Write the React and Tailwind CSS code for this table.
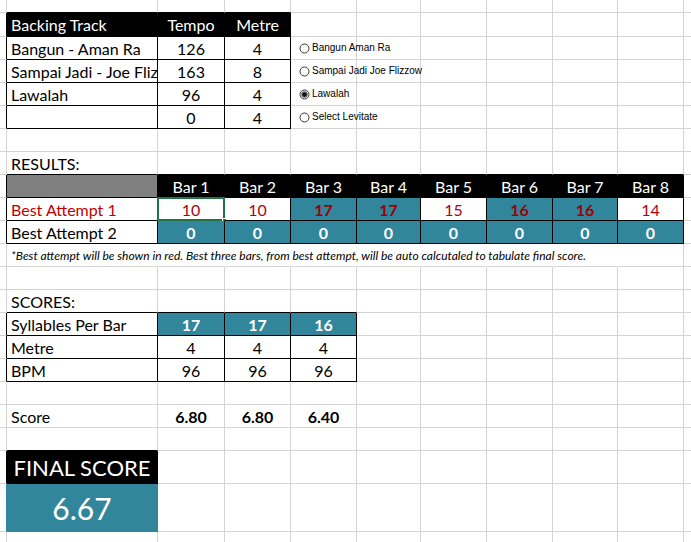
import React from 'react';

const TEAL = 'bg-[#31869b]';

const R = {
  g: 'border-r-[#d4d4d4]',
  k: 'border-r-black',
  w: 'border-r-white',
  t: 'border-r-[#31869b]',
};
const B = {
  g: 'border-b-[#d4d4d4]',
  k: 'border-b-black',
  w: 'border-b-white',
  t: 'border-b-[#31869b]',
};

const NR = 23;
const NC = 11;

const Radio = ({ label, checked }) => (
  <div className="relative z-10 flex items-center gap-[2px] pl-[8px] whitespace-nowrap font-['Liberation_Sans',Arial,sans-serif] text-[10px] text-black">
    <svg width="11" height="11" viewBox="0 0 11 11">
      <circle cx="5.5" cy="5.5" r="4.5" fill="white" stroke="#333" strokeWidth="1" />
      {checked && <circle cx="5.5" cy="5.5" r="3.3" fill="#777" />}
      {checked && <circle cx="5.5" cy="5.5" r="2.2" fill="#111" />}
    </svg>
    <span className="pb-[1px]">{label}</span>
  </div>
);

function buildSheet() {
  const grid = Array.from({ length: NR }, () =>
    Array.from({ length: NC }, () => ({ r: 'g', b: 'g', bg: '', cls: '', node: null }))
  );

  // black borders round every cell of a table
  const boxTable = (r0, r1, c0, c1) => {
    for (let r = r0; r <= r1; r++) {
      for (let c = c0; c <= c1; c++) {
        grid[r][c].r = 'k';
        grid[r][c].b = 'k';
      }
      grid[r][c0 - 1].r = 'k';
    }
    for (let c = c0; c <= c1; c++) grid[r0 - 1][c].b = 'k';
  };

  const text = (r, c, s, cls = '') => {
    grid[r][c].node = s;
    grid[r][c].cls = 'justify-start pl-[4px] ' + cls;
  };
  const num = (r, c, s, cls = '') => {
    grid[r][c].node = s;
    grid[r][c].cls = 'justify-center ' + cls;
  };

  // Backing track table
  boxTable(1, 5, 1, 3);
  for (let c = 1; c <= 3; c++) grid[1][c].bg = 'bg-black';
  text(1, 1, 'Backing Track', 'text-white');
  num(1, 2, 'Tempo', 'text-white');
  num(1, 3, 'Metre', 'text-white');
  const tracks = [
    ['Bangun - Aman Ra', '126', '4'],
    ['Sampai Jadi - Joe Flizzow', '163', '8'],
    ['Lawalah', '96', '4'],
    ['', '0', '4'],
  ];
  tracks.forEach(([name, tempo, metre], i) => {
    text(2 + i, 1, name);
    num(2 + i, 2, tempo);
    num(2 + i, 3, metre);
  });
  const radios = ['Bangun Aman Ra', 'Sampai Jadi Joe Flizzow', 'Lawalah', 'Select Levitate'];
  radios.forEach((label, i) => {
    grid[2 + i][4].node = <Radio label={label} checked={i === 2} />;
    grid[2 + i][4].cls = 'overflow-visible';
  });

  // Results
  text(7, 1, 'RESULTS:');
  boxTable(8, 10, 1, 9);
  grid[8][1].bg = 'bg-[#808080]';
  for (let c = 2; c <= 9; c++) {
    grid[8][c].bg = 'bg-black';
    num(8, c, `Bar ${c - 1}`, 'text-white');
  }
  text(9, 1, 'Best Attempt 1', 'text-[#c00000]');
  const attempt1 = [10, 10, 17, 17, 15, 16, 16, 14];
  const best = [false, false, true, true, false, true, true, false];
  attempt1.forEach((v, i) => {
    if (best[i]) {
      grid[9][2 + i].bg = TEAL;
      num(9, 2 + i, String(v), 'text-[#9c0006] font-bold');
    } else {
      num(9, 2 + i, String(v), 'text-[#b0000e]');
    }
  });
  text(10, 1, 'Best Attempt 2');
  for (let c = 2; c <= 9; c++) {
    grid[10][c].bg = TEAL;
    num(10, c, '0', 'text-white font-bold');
  }
  grid[9][2].node = (
    <>
      <span>10</span>
      <div className="absolute -left-[1px] -top-[1px] -right-[1px] -bottom-[1px] border-2 border-[#217346]" />
      <div className="absolute -right-[3px] -bottom-[3px] h-[5px] w-[5px] bg-[#217346] border border-white" />
    </>
  );
  grid[9][2].cls += ' overflow-visible';

  // note row
  for (let c = 1; c <= 8; c++) grid[11][c].r = 'w';
  grid[11][1].node = (
    <span className="relative z-10 italic text-[12px] whitespace-nowrap">
      *Best attempt will be shown in red. Best three bars, from best attempt, will be auto calcutaled to tabulate final score.
    </span>
  );
  grid[11][1].cls = 'justify-start pl-[4px] overflow-visible';

  // Scores
  text(13, 1, 'SCORES:');
  boxTable(14, 16, 1, 4);
  text(14, 1, 'Syllables Per Bar');
  ['17', '17', '16'].forEach((v, i) => {
    grid[14][2 + i].bg = TEAL;
    num(14, 2 + i, v, 'text-white font-bold');
  });
  text(15, 1, 'Metre');
  text(16, 1, 'BPM');
  for (let c = 2; c <= 4; c++) {
    num(15, c, '4');
    num(16, c, '96');
  }
  text(18, 1, 'Score');
  ['6.80', '6.80', '6.40'].forEach((v, i) => num(18, 2 + i, v, 'font-bold'));

  // Final score
  grid[19][1].b = 'k';
  grid[20][0].r = 'k';
  grid[21][0].r = 't';
  grid[20][1] = { r: 'k', b: 'k', bg: 'bg-black', cls: 'justify-center text-white text-[22px]', node: 'FINAL SCORE' };
  grid[21][1] = { r: 't', b: 't', bg: TEAL, cls: 'justify-center text-white text-[30px]', node: '6.67' };

  return grid;
}

export default function App() {
  const grid = buildSheet();
  return (
    <div className="h-[542px] w-[691px] overflow-hidden bg-white font-[Lato,'Open_Sans',sans-serif] text-[16px] leading-none text-black">
      <div className="grid w-[750px] grid-cols-[7px_151px_67px_66px_66px_64px_66px_66px_65px_66px_66px] grid-rows-[13px_24px_23px_23px_23px_23px_23px_23px_23px_23px_23px_23px_23px_23px_23px_23px_23px_23px_23px_23px_33px_48px_20px]">
        {grid.map((row, r) =>
          row.map((cell, c) => (
            <div
              key={`${r}-${c}`}
              className={`relative flex items-center overflow-hidden whitespace-nowrap border-r border-b pt-[1px] ${R[cell.r]} ${B[cell.b]} ${cell.bg} ${cell.cls}`}
            >
              {cell.node}
            </div>
          ))
        )}
      </div>
    </div>
  );
}
